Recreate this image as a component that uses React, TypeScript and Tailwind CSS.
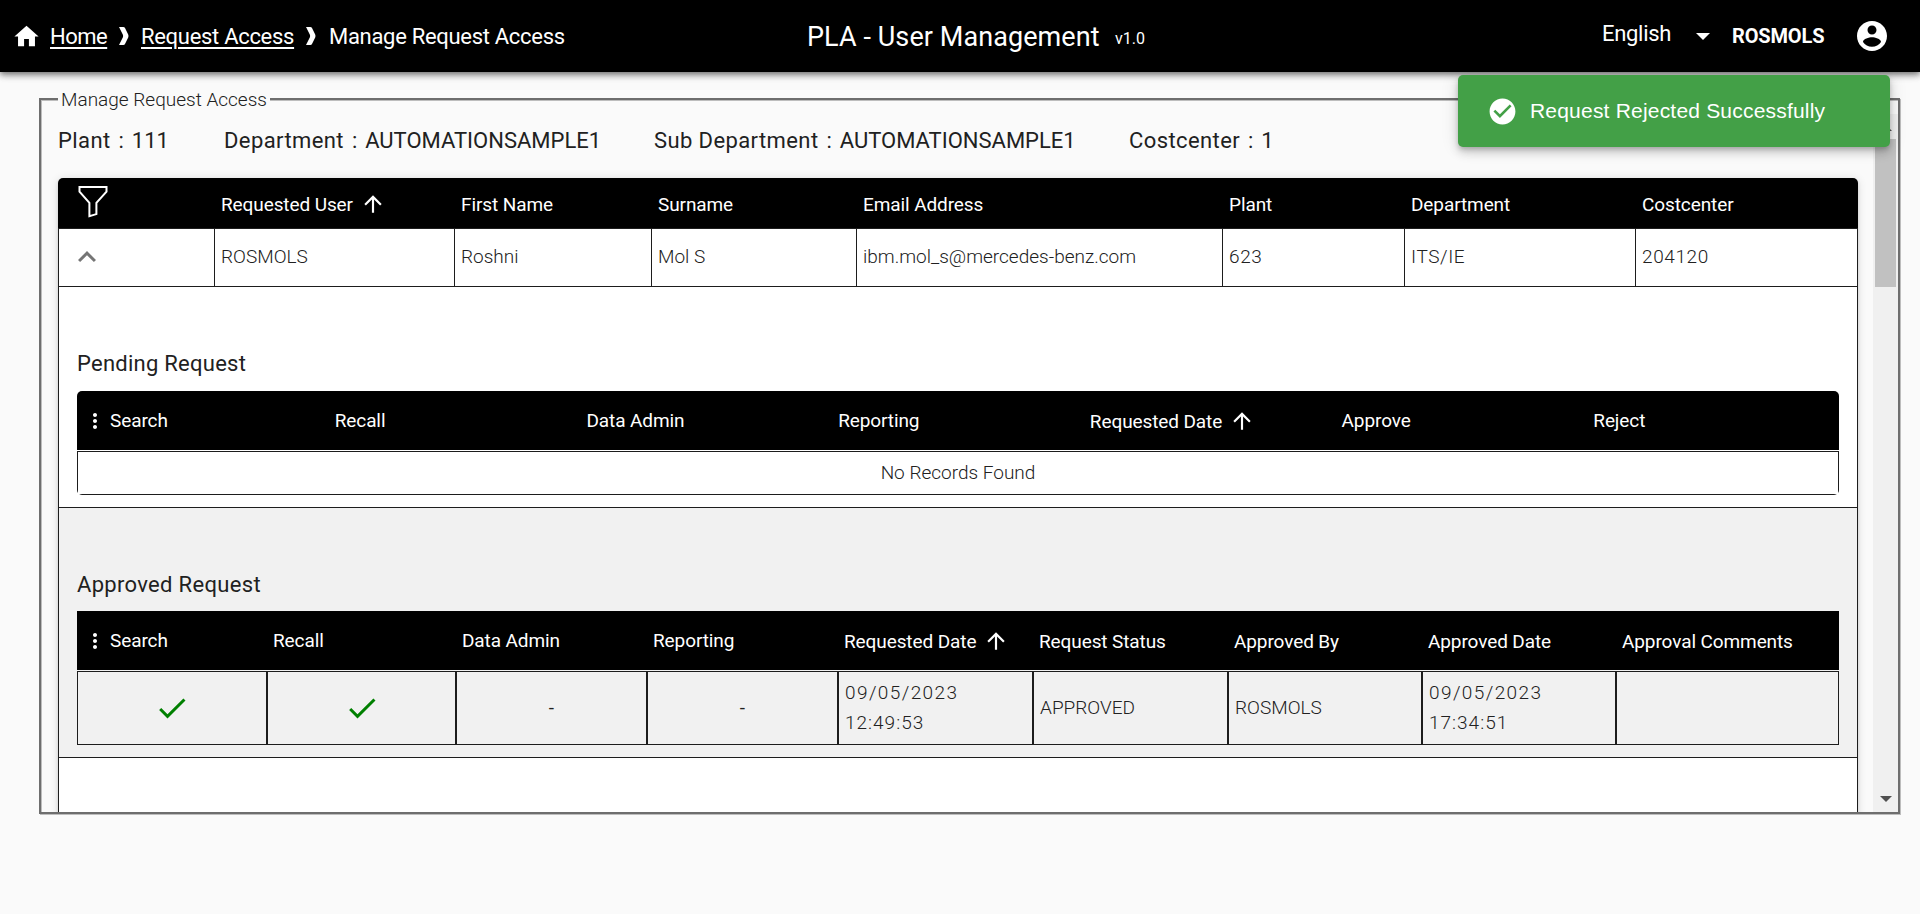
import type { ReactNode } from "react";

const paths = {
  home: "M10 20v-6h4v6h5v-8h3L12 3 2 12h3v8z",
  up: "M4 12l1.41 1.41L11 7.83V20h2V7.83l5.58 5.59L20 12l-8-8-8 8z",
  less: "M12 8l-6 6 1.41 1.41L12 10.83l4.59 4.58L18 14z",
  more: "M12 8c1.1 0 2-.9 2-2s-.9-2-2-2-2 .9-2 2 .9 2 2 2zm0 2c-1.1 0-2 .9-2 2s.9 2 2 2 2-.9 2-2-.9-2-2-2zm0 6c-1.1 0-2 .9-2 2s.9 2 2 2 2-.9 2-2-.9-2-2-2z",
  check: "M9 16.17L4.83 12l-1.42 1.41L9 19 21 7l-1.41-1.41z",
  checkCircle: "M12 2C6.48 2 2 6.48 2 12s4.48 10 10 10 10-4.48 10-10S17.52 2 12 2zm-2 15l-5-5 1.41-1.41L10 14.17l7.59-7.59L19 8l-9 9z",
  account: "M12 2C6.48 2 2 6.48 2 12s4.48 10 10 10 10-4.48 10-10S17.52 2 12 2zm0 3c1.66 0 3 1.34 3 3s-1.34 3-3 3-3-1.34-3-3 1.34-3 3-3zm0 14.2c-2.5 0-4.71-1.28-6-3.22.03-1.99 4-3.08 6-3.08 1.99 0 5.97 1.09 6 3.08-1.29 1.94-3.5 3.22-6 3.22z",
};

function Icon({ name, className }: { name: keyof typeof paths; className: string }) {
  return (
    <svg viewBox="0 0 24 24" fill="currentColor" className={`shrink-0 ${className}`}>
      <path d={paths[name]} />
    </svg>
  );
}

function Separator({ className }: { className: string }) {
  return (
    <svg viewBox="0 0 10 18" fill="currentColor" className={`h-[18px] w-[10px] ${className}`}>
      <path d="M0 0h4.2Q5.6 0 6 1l3.2 6.6q.6 1.4 0 2.8L6 17q-.4 1-1.8 1H0l3.9-7.8q.5-1.2 0-2.4z" />
    </svg>
  );
}

function Funnel() {
  return (
    <svg viewBox="0 0 30 33" fill="none" stroke="currentColor" strokeWidth="2" className="h-[33px] w-[30px]">
      <path d="M1.5 2h27v4.6L18.4 17.8v11.3l-7 2.1V17.8L1.5 6.6z" />
    </svg>
  );
}

function Head({ children, sorted, className = "" }: { children?: ReactNode; sorted?: boolean; className?: string }) {
  return (
    <div
      className={`flex items-center pl-[6px] text-[19px] leading-[28px] font-[450] tracking-[-0.1px] whitespace-nowrap text-white ${className}`}
    >
      {children}
      {sorted && <Icon name="up" className="-mt-[2px] ml-[7px] size-[26px]" />}
    </div>
  );
}

function Field({ label, value, className = "" }: { label: string; value: string; className?: string }) {
  return (
    <span className={className}>
      <span className="tracking-[0.4px]">{label}</span>
      <span className="[word-spacing:2.5px]"> : </span>
      {value}
    </span>
  );
}

const userHeads = ["First Name", "Surname", "Email Address", "Plant", "Department", "Costcenter"];
const userCells = ["ROSMOLS", "Roshni", "Mol S", "ibm.mol_s@mercedes-benz.com"];
const userCodes = ["623", "ITS/IE", "204120"];

const userCols = "grid grid-cols-[157px_240px_197px_205px_366px_182px_231px_222px]";
const approvedCols = "grid grid-cols-[190px_189px_191px_191px_195px_195px_194px_194px_223px]";
const cell = "flex items-center border border-[#1d1d1d] pl-[6px]";

export default function App() {
  return (
    <div className="relative h-[914px] w-[1920px] overflow-hidden bg-[#fafafa] font-['Roboto',sans-serif] text-[#212121]">
      <header className="relative flex h-[72px] items-center bg-black text-white shadow-[0_2px_4px_-1px_rgba(0,0,0,0.2),0_4px_5px_0_rgba(0,0,0,0.14),0_1px_10px_0_rgba(0,0,0,0.12),0_2px_8px_0_rgba(0,0,0,0.3)]">
        <nav className="flex w-[807px] items-center pl-[12px] text-[22px] tracking-[-0.3px] whitespace-nowrap">
          <Icon name="home" className="size-[29px]" />
          <a className="ml-[9px] w-[57px] tracking-[-0.5px] underline decoration-2 underline-offset-3">Home</a>
          <Separator className="ml-[12px]" />
          <a className="ml-[12px] w-[153px] underline decoration-2 underline-offset-3">Request Access</a>
          <Separator className="ml-[12px]" />
          <span className="ml-[13px]">Manage Request Access</span>
        </nav>
        <h1 className="mt-[2px] w-[308px] text-[27px] tracking-[0.08px] whitespace-nowrap">PLA - User Management</h1>
        <span className="mt-[6px] w-[487px] text-[16px]">v1.0</span>
        <span className="-mt-[5px] w-[94px] text-[22px] tracking-[-0.3px]">English</span>
        <svg viewBox="0 0 14 7" fill="currentColor" className="h-[7px] w-[14px]">
          <path d="M0 0h14L7 7z" />
        </svg>
        <span className="ml-[22px] w-[122px] text-[20px] font-bold tracking-[-0.15px]">ROSMOLS</span>
        <Icon name="account" className="size-[36px]" />
      </header>

      <fieldset className="mt-[16px] ml-[39px] w-[1861px] border-2 border-[#6e6e6e] shadow-[inset_1px_1px_0_#bdbdbd,1px_1px_0_#bdbdbd]">
        <legend className="relative ml-[17px] h-[22px] bg-[#fafafa] pr-[3px] pl-[3px] text-[19px] leading-[24px] font-light">
          Manage Request Access
        </legend>
        <div className="flex h-[702px] overflow-hidden">
          <main className="w-[1832px] pl-[17px]">
            <div className="flex h-[68px] pt-[16px] text-[22px] leading-[30px] whitespace-nowrap">
              <Field className="w-[166px]" label="Plant" value="111" />
              <Field className="w-[430px]" label="Department" value="AUTOMATIONSAMPLE1" />
              <Field className="w-[475px]" label="Sub Department" value="AUTOMATIONSAMPLE1" />
              <Field label="Costcenter" value="1" />
            </div>

            <div className="h-[900px] w-[1800px] rounded-[5px] bg-white shadow-[0_2px_4px_-1px_rgba(0,0,0,0.2),0_1px_10px_0_rgba(0,0,0,0.12)]">
              <div className={`${userCols} h-[50px] rounded-t-[5px] bg-black`}>
                <div className="pt-[7px] pl-[20px] text-white">
                  <Funnel />
                </div>
                <Head sorted className="pt-[4px]">Requested User</Head>
                {userHeads.map((h) => (
                  <Head key={h} className="pt-[4px]">{h}</Head>
                ))}
              </div>

              <div className="border-x border-[#1d1d1d]">
                <div className="-mx-px border-y border-[#1d1d1d]">
                  <div className={`${userCols} h-[57px] text-[19px] font-light`}>
                    <div className="flex items-center border-x border-[#1d1d1d] pb-[2px] pl-[10px] text-[#757575]">
                      <Icon name="less" className="size-[36px]" />
                    </div>
                    {userCells.map((c) => (
                      <div key={c} className="flex items-center border-r border-[#1d1d1d] pl-[6px]">
                        {c}
                      </div>
                    ))}
                    {userCodes.map((c) => (
                      <div key={c} className="flex items-center border-r border-[#1d1d1d] pl-[6px] tracking-[0.6px]">
                        {c}
                      </div>
                    ))}
                  </div>
                </div>

                <section className="h-[221px] border-b border-[#1d1d1d] px-[18px] pt-[61px]">
                  <h2 className="h-[43px] text-[22px] leading-[31px] tracking-[0.25px]">Pending Request</h2>
                  <div className="overflow-hidden rounded-[5px]">
                    <div className="grid h-[59px] grid-cols-7 bg-black">
                      <Head>
                        <Icon name="more" className="mr-[3px] size-[24px]" />
                        Search
                      </Head>
                      <Head>Recall</Head>
                      <Head>Data Admin</Head>
                      <Head>Reporting</Head>
                      <Head sorted className="pt-[2px]">Requested Date</Head>
                      <Head>Approve</Head>
                      <Head>Reject</Head>
                    </div>
                    <div className="mt-px flex h-[44px] items-center justify-center border border-[#1d1d1d] pt-px text-[19px] font-light">
                      No Records Found
                    </div>
                  </div>
                </section>

                <section className="h-[250px] border-b border-[#1d1d1d] bg-[#f1f1f1] px-[18px] pt-[61px]">
                  <h2 className="h-[42px] text-[22px] leading-[31px] tracking-[0.32px]">Approved Request</h2>
                  <div className={`${approvedCols} h-[59px] bg-black`}>
                    <Head>
                      <Icon name="more" className="mr-[3px] size-[24px]" />
                      Search
                    </Head>
                    <Head>Recall</Head>
                    <Head>Data Admin</Head>
                    <Head>Reporting</Head>
                    <Head sorted className="pt-[2px]">Requested Date</Head>
                    <Head className="pt-[2px]">Request Status</Head>
                    <Head className="pt-[2px]">Approved By</Head>
                    <Head className="pt-[2px]">Approved Date</Head>
                    <Head className="pt-[2px]">Approval Comments</Head>
                  </div>
                  <div className={`${approvedCols} mt-px h-[74px] text-[19px] leading-[30px] font-light`}>
                    <div className="flex items-center justify-center border border-[#1d1d1d] text-[#008000]">
                      <Icon name="check" className="size-[36px]" />
                    </div>
                    <div className="flex items-center justify-center border border-[#1d1d1d] text-[#008000]">
                      <Icon name="check" className="size-[36px]" />
                    </div>
                    <div className="flex items-center justify-center border border-[#1d1d1d] font-normal">-</div>
                    <div className="flex items-center justify-center border border-[#1d1d1d] font-normal">-</div>
                    <div className={cell}>
                      <div className="tracking-[1px]">
                        <p className="tracking-[1.4px]">09/05/2023</p>
                        <p>12:49:53</p>
                      </div>
                    </div>
                    <div className={cell}>APPROVED</div>
                    <div className={cell}>ROSMOLS</div>
                    <div className={cell}>
                      <div className="tracking-[1px]">
                        <p className="tracking-[1.4px]">09/05/2023</p>
                        <p>17:34:51</p>
                      </div>
                    </div>
                    <div className={cell} />
                  </div>
                </section>
                <div className="h-[100px]" />
              </div>
            </div>
          </main>

          <div className="mt-[4px] flex w-[25px] flex-col items-center bg-[#f0f0f0]">
            <svg viewBox="0 0 12 6" fill="#505050" className="mt-[11px] h-[6px] w-[12px]">
              <path d="M0 6h12L6 0z" />
            </svg>
            <div className="mt-[8px] h-[148px] w-[21px] bg-[#c1c1c1]" />
            <svg viewBox="0 0 12 6" fill="#505050" className="mt-auto mb-[10px] h-[6px] w-[12px]">
              <path d="M0 0h12L6 6z" />
            </svg>
          </div>
        </div>
      </fieldset>

      <div
        role="status"
        className="absolute top-[75px] left-[1458px] flex h-[72px] w-[432px] items-center rounded-[5px] bg-[#43a047] pl-[29px] font-['Liberation_Sans',sans-serif] text-[21px] tracking-[0.2px] text-white shadow-[0_3px_5px_-1px_rgba(0,0,0,0.2),0_6px_10px_0_rgba(0,0,0,0.14),0_1px_18px_0_rgba(0,0,0,0.12)]"
      >
        <Icon name="checkCircle" className="mr-[12px] size-[31px]" />
        <span className="-mt-px">Request Rejected Successfully</span>
      </div>
    </div>
  );
}
